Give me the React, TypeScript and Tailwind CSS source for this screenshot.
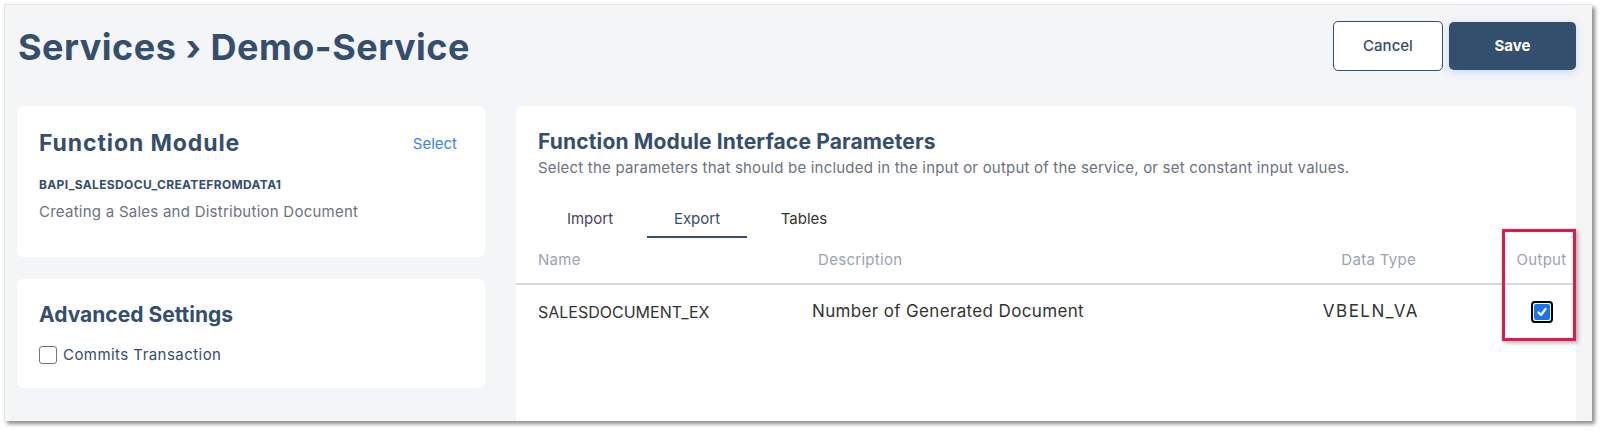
import React from 'react';

const font = { fontFamily: 'Inter, "Noto Sans", sans-serif' };

function CheckedBox() {
  return (
    <div className="w-[22px] h-[22px] rounded-[4px] border-2 border-black p-[1px] bg-white">
      <div className="w-full h-full rounded-[2px] bg-[#1a73e8] flex items-center justify-center">
        <svg viewBox="0 0 12 12" className="w-[12px] h-[12px]" fill="none" stroke="white" strokeWidth="2.2" strokeLinecap="round" strokeLinejoin="round">
          <path d="M2.5 6.5 L5 9 L9.5 3" />
        </svg>
      </div>
    </div>
  );
}

export default function App() {
  return (
    <div className="w-[1601px] h-[431px] bg-white pl-[4px] pt-[4px]" style={font}>
      <div className="w-[1588px] h-[417px] bg-[#f4f5f7] border-t border-l border-[#e4e4e4] shadow-[3px_3px_4px_rgba(0,0,0,0.45)] overflow-hidden pl-[12px] pr-[16px] pt-[16px] flex flex-col">
        {/* header */}
        <div className="flex items-center justify-between h-[50px]">
          <h1 className="pl-[1px] pt-[2px] text-[36px] font-bold text-[#344e6e] tracking-[0.5px]">Services › Demo-Service</h1>
          <div className="flex items-center gap-[6px]">
            <button className="w-[110px] h-[50px] rounded-[5px] border border-[#344e6e] bg-white text-[15px] font-medium text-[#344e6e]">Cancel</button>
            <button className="w-[127px] h-[48px] rounded-[5px] bg-[#344e6e] text-[15px] font-bold text-white shadow-[0_2px_8px_rgba(59,130,246,0.25)]">Save</button>
          </div>
        </div>
        <div className="mt-[12px] h-px bg-[#e7e8eb]" />

        {/* body */}
        <div className="mt-[23px] flex gap-[31px]">
          <div className="w-[468px] flex flex-col gap-[22px]">
            <div className="h-[151px] bg-white rounded-[6px] px-[22px] pt-[22px]">
              <div className="flex items-center justify-between pr-[6px]">
                <h2 className="text-[23px] leading-[30px] font-bold text-[#344e6e] tracking-[0.9px]">Function Module</h2>
                <span className="text-[15px] text-[#3b82f6] mt-[3px]">Select</span>
              </div>
              <div className="mt-[19px] text-[12px] leading-[16px] font-bold text-[#344e6e] tracking-[0.35px]">BAPI_SALESDOCU_CREATEFROMDATA1</div>
              <div className="mt-[8px] text-[15px] leading-[22px] text-[#6b7280] tracking-[0.25px]">Creating a Sales and Distribution Document</div>
            </div>
            <div className="h-[109px] bg-white rounded-[6px] px-[22px] pt-[22px]">
              <h2 className="text-[21px] leading-[28px] font-bold text-[#344e6e]">Advanced Settings</h2>
              <label className="mt-[16px] flex items-center gap-[6px] h-[20px]">
                <span className="w-[18px] h-[18px] rounded-[3px] border border-[#767676] bg-white" />
                <span className="text-[15px] text-[#344e6e] tracking-[0.45px]">Commits Transaction</span>
              </label>
            </div>
          </div>

          <div className="flex-1 h-[400px] bg-white rounded-t-[6px] relative">
            <div className="px-[22px] pt-[22px]">
              <h2 className="text-[21px] leading-[28px] font-bold text-[#344e6e] tracking-[0.15px]">Function Module Interface Parameters</h2>
              <p className="mt-[2px] text-[15px] leading-[20px] text-[#6b7280] tracking-[0.2px]">Select the parameters that should be included in the input or output of the service, or set constant input values.</p>
              <div className="mt-[24px] ml-[2px] flex gap-[7px]">
                <div className="w-[100px] h-[36px] flex items-center justify-center text-[15px] text-[#4a3f66] border-b-2 border-transparent">Import</div>
                <div className="w-[100px] h-[36px] flex items-center justify-center text-[15px] text-[#344e6e] border-b-2 border-[#344e6e]">Export</div>
                <div className="w-[100px] h-[36px] flex items-center justify-center text-[15px] text-[#333333] border-b-2 border-transparent">Tables</div>
              </div>
            </div>

            {/* table */}
            <div className="grid grid-cols-[280px_504px_207px_1fr] h-[47px] items-center border-b-2 border-[#d5d8dd] text-[15px] text-[#9aa3b2] tracking-[0.3px]">
              <div className="pl-[22px]">Name</div>
              <div className="pl-[22px]">Description</div>
              <div className="text-right pr-[91px]">Data Type</div>
              <div className="text-center">Output</div>
            </div>
            <div className="grid grid-cols-[280px_504px_207px_1fr] h-[54px] items-center text-[16px] text-[#333333]">
              <div className="pl-[22px]">SALESDOCUMENT_EX</div>
              <div className="pl-[16px] text-[17px] tracking-[0.35px]">Number of Generated Document</div>
              <div className="text-right pr-[88px] text-[17px] tracking-[1.5px]">VBELN_VA</div>
              <div className="flex justify-center"><CheckedBox /></div>
            </div>

            <div className="absolute top-[123px] right-[0px] w-[74px] h-[112px] border-[3px] border-[#e8174a] shadow-[2px_2px_4px_rgba(0,0,0,0.3)]" />
          </div>
        </div>
      </div>
    </div>
  );
}
